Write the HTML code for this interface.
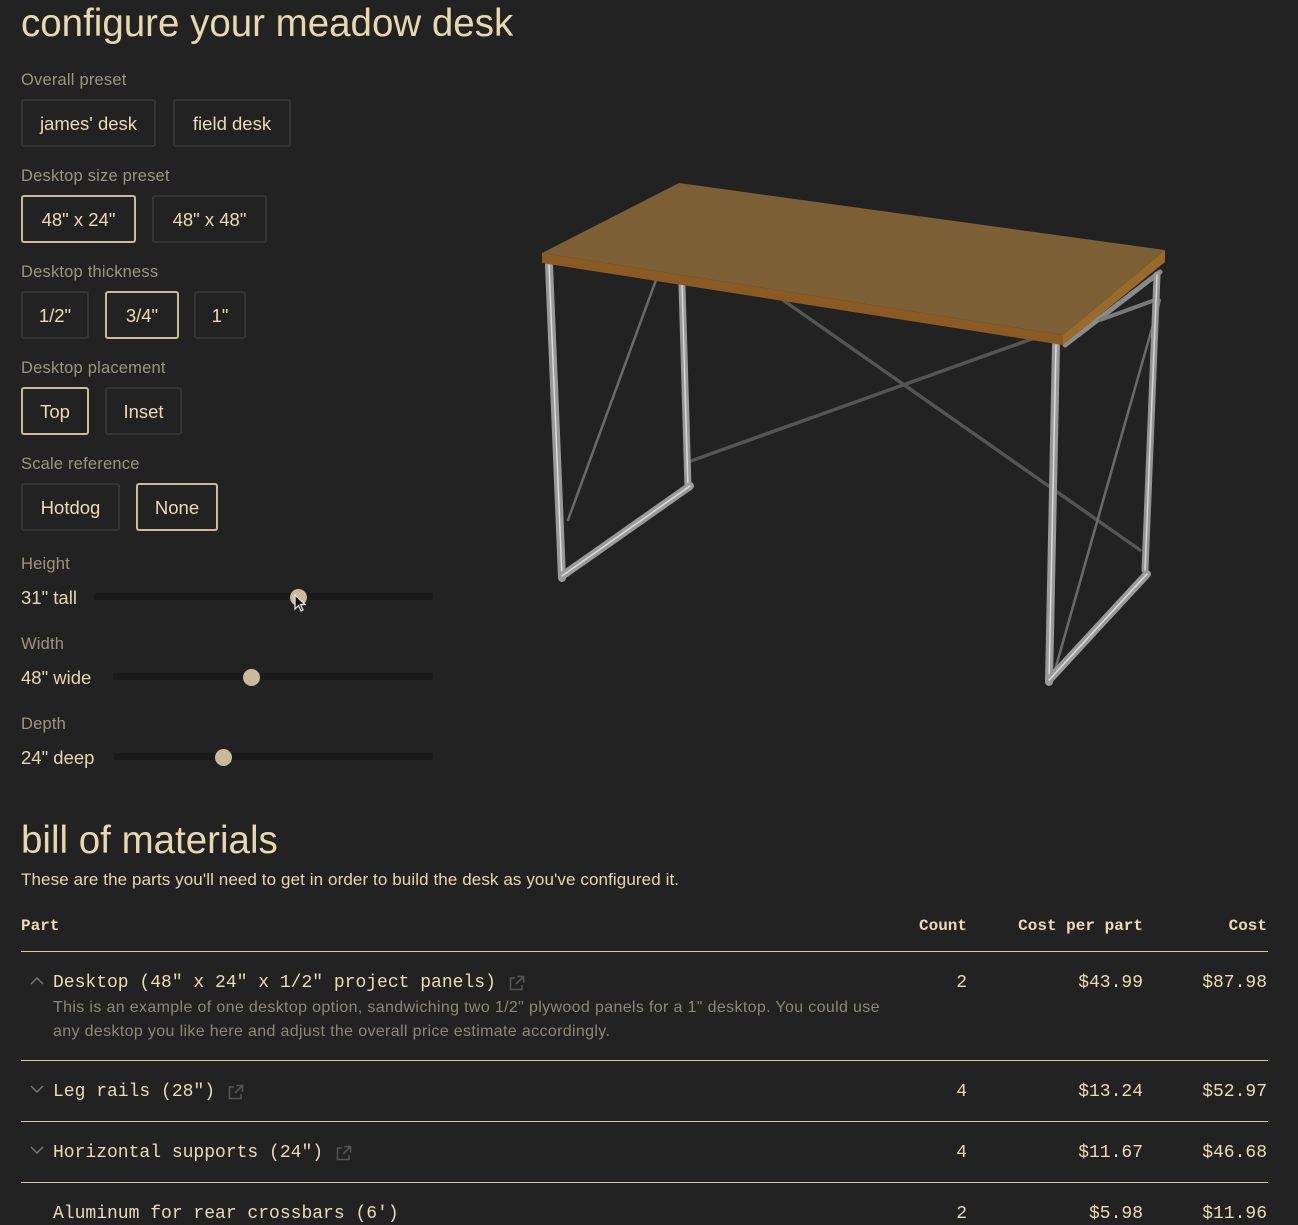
<!DOCTYPE html>
<html><head><meta charset="utf-8">
<style>
*{margin:0;padding:0;box-sizing:border-box}
body{width:1298px;height:1210px;background:#222222;overflow:hidden;position:relative;font-family:"Liberation Sans",sans-serif;color:#e8d8ae}
.a{position:absolute;white-space:nowrap}
.t{font-size:38.5px;line-height:44px}
.lbl{font-size:16.5px;line-height:20px;color:#a0967f;letter-spacing:0.2px}
.btn{position:absolute;height:48px;border:2px solid #353432;border-radius:3px;font-size:18.5px;line-height:45px;text-align:center;color:#ecdcb2}
.btn.on{border-color:#c9bc96}
.val{font-size:18.5px;line-height:22px}
.track{position:absolute;height:7px;background:#1a1a1a;border-radius:2px}
.thumb{position:absolute;width:17px;height:17px;border-radius:50%;background:#c8bb99}
.m{font-family:"Liberation Mono",monospace;font-size:18px;line-height:22px;color:#ecdcb2}
.h{font-family:"Liberation Mono",monospace;font-size:16px;font-weight:bold;line-height:20px;color:#ecdcb2}
.r{text-align:right}
.line{position:absolute;left:21px;width:1247px;height:1px;background:#d8c89e}
.desc{font-size:16px;line-height:24px;color:#8e8878;letter-spacing:0.35px}
.chev{position:absolute;width:16px;height:12px}
</style></head><body>
<div class="a t" style="left:21px;top:2px">configure your meadow desk</div>

<div class="a lbl" style="left:21px;top:70px">Overall preset</div>
<div class="btn" style="left:21px;top:99px;width:135px">james' desk</div>
<div class="btn" style="left:173px;top:99px;width:118px">field desk</div>

<div class="a lbl" style="left:21px;top:166px">Desktop size preset</div>
<div class="btn on" style="left:21px;top:195px;width:115px">48" x 24"</div>
<div class="btn" style="left:152px;top:195px;width:115px">48" x 48"</div>

<div class="a lbl" style="left:21px;top:262px">Desktop thickness</div>
<div class="btn" style="left:21px;top:291px;width:68px">1/2"</div>
<div class="btn on" style="left:105px;top:291px;width:74px">3/4"</div>
<div class="btn" style="left:194px;top:291px;width:52px">1"</div>

<div class="a lbl" style="left:21px;top:358px">Desktop placement</div>
<div class="btn on" style="left:21px;top:387px;width:68px">Top</div>
<div class="btn" style="left:105px;top:387px;width:77px">Inset</div>

<div class="a lbl" style="left:21px;top:454px">Scale reference</div>
<div class="btn" style="left:21px;top:483px;width:99px">Hotdog</div>
<div class="btn on" style="left:136px;top:483px;width:82px">None</div>

<div class="a lbl" style="left:21px;top:554px">Height</div>
<div class="a val" style="left:21px;top:587px">31" tall</div>
<div class="track" style="left:94px;top:593px;width:339px"></div>
<div class="thumb" style="left:290px;top:589px"></div>
<svg class="a" style="left:294px;top:594px" width="14" height="20" viewBox="0 0 14 20"><path d="M1 1 L1 15 L4.5 11.5 L7 17 L9 16 L6.5 10.5 L11 10.5 Z" fill="#111" stroke="#eee" stroke-width="1.2"/></svg>

<div class="a lbl" style="left:21px;top:634px">Width</div>
<div class="a val" style="left:21px;top:667px">48" wide</div>
<div class="track" style="left:113px;top:673px;width:320px"></div>
<div class="thumb" style="left:243px;top:669px"></div>

<div class="a lbl" style="left:21px;top:714px">Depth</div>
<div class="a val" style="left:21px;top:747px">24" deep</div>
<div class="track" style="left:114px;top:753px;width:319px"></div>
<div class="thumb" style="left:215px;top:749px"></div>

<svg class="a" style="left:0;top:0" width="1298" height="720" viewBox="0 0 1298 720">
 <g stroke-linecap="round">
  <line x1="780" y1="298" x2="1140" y2="550" stroke="#555" stroke-width="3.5"/>
  <line x1="688" y1="462" x2="1040" y2="336" stroke="#555" stroke-width="3.5"/>
  <line x1="656" y1="280" x2="568" y2="520" stroke="#6a6a6a" stroke-width="2.5"/>
  <line x1="1160" y1="300" x2="1055" y2="670" stroke="#6a6a6a" stroke-width="2.5"/>
  <line x1="1065" y1="345" x2="1160" y2="272" stroke="#8a8a8a" stroke-width="5"/>
  <line x1="1100" y1="320" x2="1155" y2="300" stroke="#7a7a7a" stroke-width="4"/>
  <line x1="682" y1="285" x2="688" y2="488" stroke="#999" stroke-width="7"/>
  <line x1="682" y1="285" x2="688" y2="488" stroke="#d8d8d8" stroke-width="1.5"/>
  <line x1="549" y1="265" x2="562" y2="578" stroke="#999" stroke-width="8"/>
  <line x1="549" y1="265" x2="562" y2="578" stroke="#dcdcdc" stroke-width="1.5"/>
  <line x1="562" y1="576" x2="690" y2="486" stroke="#9a9a9a" stroke-width="8"/>
  <line x1="562" y1="576" x2="690" y2="486" stroke="#dcdcdc" stroke-width="1.5"/>
  <line x1="1157" y1="275" x2="1145" y2="570" stroke="#949494" stroke-width="7"/>
  <line x1="1157" y1="275" x2="1145" y2="570" stroke="#d5d5d5" stroke-width="1.5"/>
  <line x1="1056" y1="345" x2="1049" y2="682" stroke="#999" stroke-width="8"/>
  <line x1="1056" y1="345" x2="1049" y2="682" stroke="#dcdcdc" stroke-width="1.5"/>
  <line x1="1049" y1="680" x2="1147" y2="574" stroke="#9a9a9a" stroke-width="8"/>
  <line x1="1049" y1="680" x2="1147" y2="574" stroke="#dcdcdc" stroke-width="1.5"/>
 </g>
 <polygon points="542,263 1063,345 1063,335 542,253" fill="#8a5a22"/>
 <polygon points="1063,345 1165,262 1165,250 1063,335" fill="#9a6a2a"/>
 <polygon points="679,183 1165,250 1063,335 542,253" fill="#7d5f35"/>
</svg>

<div class="a t" style="left:21px;top:819px">bill of materials</div>
<div class="a" style="left:21px;top:870px;font-size:17px;line-height:20px;letter-spacing:0.1px">These are the parts you'll need to get in order to build the desk as you've configured it.</div>

<div class="a h" style="left:21px;top:916px">Part</div>
<div class="a h r" style="right:331px;top:916px">Count</div>
<div class="a h r" style="right:155px;top:916px">Cost per part</div>
<div class="a h r" style="right:31px;top:916px">Cost</div>
<div class="line" style="top:951px"></div>

<svg class="chev" style="left:29px;top:975px" viewBox="0 0 16 12"><path d="M2 9 L8 3 L14 9" fill="none" stroke="#777" stroke-width="1.5"/></svg>
<div class="a m" style="left:53px;top:972px">Desktop (48" x 24" x 1/2" project panels)</div>
<svg class="a" style="left:508px;top:975px" width="17" height="17" viewBox="0 0 17 17"><path d="M7 3 H2.5 V14.5 H14 V10 M9.5 1.5 H15.5 V7.5 M15.5 1.5 L8 9" fill="none" stroke="#555" stroke-width="1.6"/></svg>
<div class="a m r" style="right:331px;top:972px">2</div>
<div class="a m r" style="right:155px;top:972px">$43.99</div>
<div class="a m r" style="right:31px;top:972px">$87.98</div>
<div class="a desc" style="left:53px;top:996px">This is an example of one desktop option, sandwiching two 1/2" plywood panels for a 1" desktop. You could use<br>any desktop you like here and adjust the overall price estimate accordingly.</div>
<div class="line" style="top:1060px"></div>

<svg class="chev" style="left:29px;top:1083px" viewBox="0 0 16 12"><path d="M2 3 L8 9 L14 3" fill="none" stroke="#777" stroke-width="1.5"/></svg>
<div class="a m" style="left:53px;top:1081px">Leg rails (28")</div>
<svg class="a" style="left:227px;top:1084px" width="17" height="17" viewBox="0 0 17 17"><path d="M7 3 H2.5 V14.5 H14 V10 M9.5 1.5 H15.5 V7.5 M15.5 1.5 L8 9" fill="none" stroke="#555" stroke-width="1.6"/></svg>
<div class="a m r" style="right:331px;top:1081px">4</div>
<div class="a m r" style="right:155px;top:1081px">$13.24</div>
<div class="a m r" style="right:31px;top:1081px">$52.97</div>
<div class="line" style="top:1121px"></div>

<svg class="chev" style="left:29px;top:1144px" viewBox="0 0 16 12"><path d="M2 3 L8 9 L14 3" fill="none" stroke="#777" stroke-width="1.5"/></svg>
<div class="a m" style="left:53px;top:1142px">Horizontal supports (24")</div>
<svg class="a" style="left:335px;top:1145px" width="17" height="17" viewBox="0 0 17 17"><path d="M7 3 H2.5 V14.5 H14 V10 M9.5 1.5 H15.5 V7.5 M15.5 1.5 L8 9" fill="none" stroke="#555" stroke-width="1.6"/></svg>
<div class="a m r" style="right:331px;top:1142px">4</div>
<div class="a m r" style="right:155px;top:1142px">$11.67</div>
<div class="a m r" style="right:31px;top:1142px">$46.68</div>
<div class="line" style="top:1182px"></div>

<div class="a m" style="left:53px;top:1203px">Aluminum for rear crossbars (6')</div>
<div class="a m r" style="right:331px;top:1203px">2</div>
<div class="a m r" style="right:155px;top:1203px">$5.98</div>
<div class="a m r" style="right:31px;top:1203px">$11.96</div>
</body></html>
